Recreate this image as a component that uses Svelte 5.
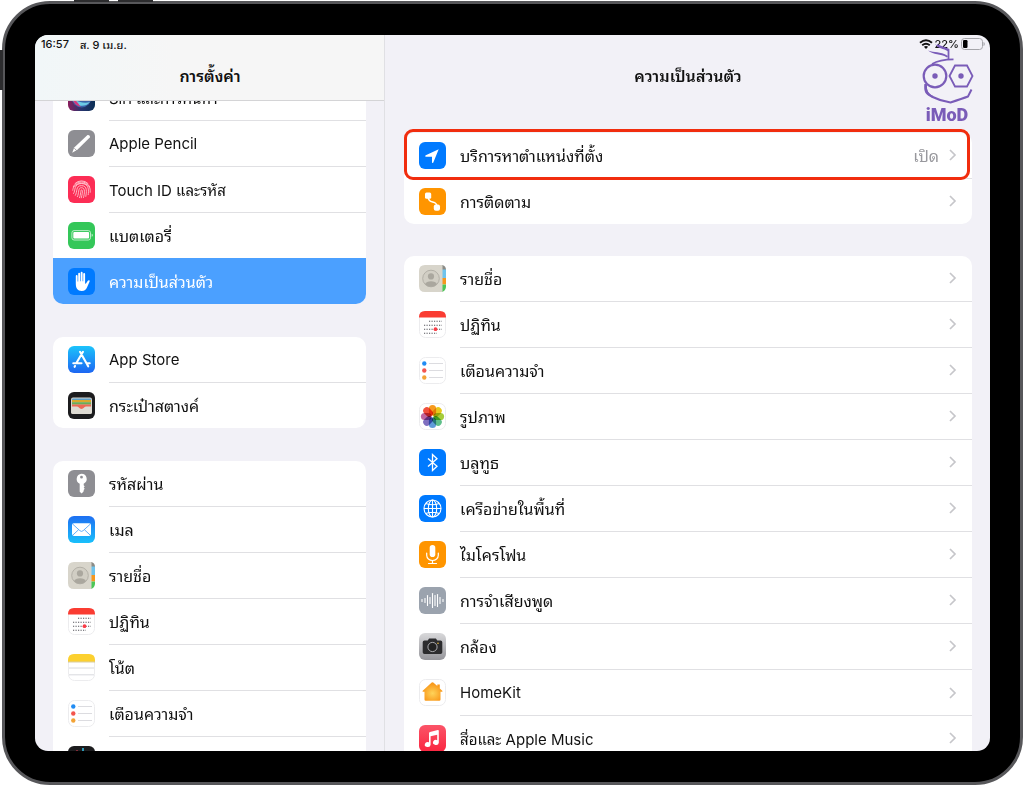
<script>
  const sidebar = [
    [
      { icon: 'siri', label: 'Siri และการค้นหา' },
      { icon: 'pencil', label: 'Apple Pencil' },
      { icon: 'touchid', label: 'Touch ID และรหัส' },
      { icon: 'battery', label: 'แบตเตอรี่' },
      { icon: 'privacy', label: 'ความเป็นส่วนตัว' }
    ],
    [
      { icon: 'appstore', label: 'App Store' },
      { icon: 'wallet', label: 'กระเป๋าสตางค์' }
    ],
    [
      { icon: 'key', label: 'รหัสผ่าน' },
      { icon: 'mail', label: 'เมล' },
      { icon: 'contacts', label: 'รายชื่อ' },
      { icon: 'calendar', label: 'ปฏิทิน' },
      { icon: 'notes', label: 'โน้ต' },
      { icon: 'reminders', label: 'เตือนความจำ' },
      { icon: 'voice', label: 'เสียงบันทึก' }
    ]
  ];

  const privacy = [
    [
      { icon: 'location', label: 'บริการหาตำแหน่งที่ตั้ง', value: 'เปิด' },
      { icon: 'tracking', label: 'การติดตาม' }
    ],
    [
      { icon: 'contacts', label: 'รายชื่อ' },
      { icon: 'calendar', label: 'ปฏิทิน' },
      { icon: 'reminders', label: 'เตือนความจำ' },
      { icon: 'photos', label: 'รูปภาพ' },
      { icon: 'bluetooth', label: 'บลูทูธ' },
      { icon: 'network', label: 'เครือข่ายในพื้นที่' },
      { icon: 'mic', label: 'ไมโครโฟน' },
      { icon: 'speech', label: 'การจำเสียงพูด' },
      { icon: 'camera', label: 'กล้อง' },
      { icon: 'home', label: 'HomeKit' },
      { icon: 'music', label: 'สื่อและ Apple Music' }
    ]
  ];

  const petals = ['#f79a1e', '#e8c81c', '#a5cc3a', '#5fbf8a', '#5f9bd8', '#7f6fc0', '#c0669f', '#f0503c'];
  const bars = [[3, 1], [6, 2], [8.5, 5], [11, 3], [13.5, 7], [16, 5], [18.5, 6], [21, 3], [24, 1]];

  let selected = $state('privacy');

  // Thai glyphs run smaller and sit lower than Latin ones
  const hasThai = (text) => /[\u0e00-\u0e7f]/.test(text);
  const hasLatin = (text) => /[a-z]/i.test(text);
</script>

{#snippet appIcon(name)}
  <svg class="icon" viewBox="0 0 27 27" aria-hidden="true">
    {#if name === 'siri'}
      <defs>
        <linearGradient id="siri" x1="0" x2="1"><stop offset="0" stop-color="#8a1d5c" /><stop offset=".5" stop-color="#27356f" /><stop offset="1" stop-color="#0b2f55" /></linearGradient>
      </defs>
      <rect width="27" height="27" rx="6" fill="url(#siri)" />
      <circle cx="13.5" cy="13.5" r="10" fill="#3c63a8" />
      <path d="M4 15c4 8 13 9 18 3-5 2-11 0-18-3z" fill="#6ccbe6" />
      <path d="M4 14c2 6 5 8 9 9-3-3-4-7-9-9z" fill="#d6377f" />
    {:else if name === 'pencil'}
      <rect width="27" height="27" rx="6" fill="#8e8e93" />
      <path d="M19 5.400c1.400-1 3.600.4 2.800 2.200L9.400 19.800 4.200 22.800l2-5.400z" fill="#fff" />
      <path d="M6.300 18.300l2.400 2.200" stroke="#8e8e93" stroke-width=".8" />
    {:else if name === 'touchid'}
      <rect width="27" height="27" rx="6" fill="#fc2d55" />
      <g fill="none" stroke="#ffc3cd" stroke-width=".9" stroke-linecap="round">
        <path d="M7 7.500a9 9 0 0 1 13 0M5.200 10.800c2.700-6.400 13.600-6.700 16.500 0M4.800 14.300c0-9.300 17.400-9.500 17.400 0v2" />
        <path d="M5.600 17.500c2.200-2.700-.2-9.800 7.900-10 8.300.2 7.100 8 6.700 11.200M7.400 19.300c2.200-3.500 0-9.500 6.100-9.700 6.200.2 5 6.500 4.300 10.800" />
        <path d="M9.400 20.700c2-3.700.2-8.900 4.100-9 4.200.1 3 6 2 9.800M11.500 21.700c1.400-3 1-7.800 2-7.900 1.700 0 .6 5-.2 8" />
      </g>
    {:else if name === 'battery'}
      <rect width="27" height="27" rx="6" fill="#34c759" />
      <rect x="3.900" y="8.600" width="18.600" height="9.400" rx="2.200" fill="none" stroke="#c9f2d3" stroke-width=".9" />
      <rect x="5.300" y="10" width="15.800" height="6.600" rx="1" fill="#fff" />
      <path d="M23.700 11.800c1.400.4 1.400 2.600 0 3z" fill="#d6f5de" />
    {:else if name === 'privacy'}
      <rect width="27" height="27" rx="6" fill="#007aff" />
      <path d="M7.800 15.500V8a.9.9 0 0 1 1.800 0v5.500h.6V5.700a.95.95 0 0 1 1.900 0v7.500h.6V4.800a.95.95 0 0 1 1.900 0v8.400h.6V6a.95.95 0 0 1 1.900 0v9.500l.7.300 2-3.100c.7-1 2.300-.5 1.800.7l-2.400 5.600c-1.100 2.500-2.600 3.900-5.500 3.900-4.200 0-5.900-2.600-5.900-7.400z" fill="#fff" />
    {:else if name === 'appstore'}
      <defs>
        <linearGradient id="store" x2="0" y2="1"><stop stop-color="#1cc3fb" /><stop offset="1" stop-color="#1d66f2" /></linearGradient>
      </defs>
      <rect width="27" height="27" rx="6" fill="url(#store)" />
      <g stroke="#fff" stroke-width="2.100" stroke-linecap="round">
        <path d="M12 5.800l8.200 14.500M15 5.800L8.400 17M7 20l-.4.800M5.300 17.200h8.200M18.500 17.200h3.200" />
      </g>
    {:else if name === 'wallet'}
      <rect width="27" height="27" rx="6" fill="#1c1c1e" />
      <rect x="3" y="5.500" width="21" height="16.500" rx="2" fill="#d9d6cd" />
      <path d="M4 8.500V7.500q0-1 1-1h17q1 0 1 1v1z" fill="#5b9dc9" />
      <path d="M4 8h19v2.200H4z" fill="#d9a92c" />
      <path d="M4 10.200h19v2.400H4z" fill="#69ad58" />
      <path d="M4 12.500h19v2.600h-5.500c-1.500 0-1.600 3-4 3s-2.500-3-4-3H4z" fill="#ed6a55" />
      <path d="M3 14.400h6.200c1.500 0 1.900 2.500 4.300 2.500s2.800-2.500 4.300-2.500H24V20q0 2-2 2H5q-2 0-2-2z" fill="#dedbd3" />
    {:else if name === 'key'}
      <rect width="27" height="27" rx="6" fill="#8e8e93" />
      <path fill-rule="evenodd" d="M13.500 3.800a5.200 5.200 0 0 1 2.200 9.900v1.500l1 1.200-1 1.200 1 1.200-1 1.200v1.300l-2 2.100-2-1.700v-8a5.200 5.200 0 0 1 1.800-9.900zm0 2a1.400 1.400 0 1 0 0 2.800 1.400 1.400 0 0 0 0-2.800z" fill="#fff" />
    {:else if name === 'mail'}
      <defs>
        <linearGradient id="mail" x2="0" y2="1"><stop stop-color="#1e6ff2" /><stop offset="1" stop-color="#19c0fb" /></linearGradient>
      </defs>
      <rect width="27" height="27" rx="6" fill="url(#mail)" />
      <rect x="4" y="7.300" width="19" height="12.600" rx="1.800" fill="#fff" />
      <path d="M4.600 8l7.300 6.700q1.600 1.400 3.200 0L22.400 8M4.600 19.300l6.100-5.700M22.400 19.300l-6.100-5.700" fill="none" stroke="#3d9af7" stroke-width=".8" />
    {:else if name === 'contacts'}
      <path d="M17 0h6.500Q27 1 27 5v4H17z" fill="#8b8b86" />
      <path d="M17 4.500h10v9H17z" fill="#6fc3ec" />
      <path d="M17 13h10v6.500H17z" fill="#f5971f" />
      <path d="M17 19.500h10V22q-.5 4-4 5h-6z" fill="#4cc658" />
      <path d="M6 0h17.500v27H6q-6 0-6-6V6q0-6 6-6z" fill="#d8d5cb" />
      <circle cx="12" cy="13.500" r="8.300" fill="#d1cec4" stroke="#b3b0a7" />
      <circle cx="12" cy="11.400" r="3.100" fill="#aaa79e" />
      <path d="M6 19.200c1-4 11-4 12 0a8.300 8.300 0 0 1-12 0z" fill="#aaa79e" />
    {:else if name === 'calendar'}
      <rect x=".5" y=".5" width="26" height="26" rx="6" fill="#fff" stroke="#ececee" />
      <path d="M0 6q0-6 6-6h15q6 0 6 6v.5H0z" fill="#fa3c32" />
      <g stroke="#55555c" stroke-width="1.100" stroke-dasharray="1.200 1.300">
        <path d="M10 10.300h13M5 14.300h18M5 18.200h18M5 22.300h13" />
      </g>
      <circle cx="16.500" cy="18.200" r="1.900" fill="#fa3c46" />
    {:else if name === 'notes'}
      <rect x=".5" y=".5" width="26" height="26" rx="6" fill="#fff" stroke="#ececee" />
      <path d="M0 6q0-6 6-6h15q6 0 6 6v1.700H0z" fill="#fcd02f" />
      <path d="M0 8h27" stroke="#c9b876" stroke-width=".7" />
      <path d="M1 14h25M1 20.800h25" stroke="#ced1d6" stroke-width=".8" />
    {:else if name === 'reminders'}
      <rect x=".5" y=".5" width="26" height="26" rx="6" fill="#fff" stroke="#ececee" />
      <circle cx="5.300" cy="6.500" r="2.200" fill="#218cf3" />
      <circle cx="5.300" cy="13.500" r="2.200" fill="#f3554e" />
      <circle cx="5.300" cy="20.500" r="2.200" fill="#f3a336" />
      <path d="M10 6.500h14M10 13.500h14M10 20.500h14" stroke="#d8d8dc" stroke-width=".9" />
    {:else if name === 'voice'}
      <rect width="27" height="27" rx="6" fill="#1c1c1e" />
      <path d="M9 4v18M6 9v9M11.500 7v13" stroke="#e63a50" />
      <path d="M15 2v23" stroke="#35c3e8" stroke-width="1.500" />
      <path d="M18 7v13M21 10v7" stroke="#ddd" />
    {:else if name === 'location'}
      <rect width="27" height="27" rx="6" fill="#007aff" />
      <path d="M19.700 7.300 14.300 20.500c-.4.900-1.300.7-1.300-.2v-5.600H7c-1 0-1.200-.9-.2-1.400z" fill="#fff" />
    {:else if name === 'tracking'}
      <rect width="27" height="27" rx="6" fill="#ff9500" />
      <rect x="6" y="4.500" width="6.200" height="6.200" rx="1.500" fill="#fff" />
      <rect x="14.800" y="16.500" width="6.200" height="6.200" rx="2" fill="#fff" />
      <path d="M9 8c0 9 9 3 9 11" fill="none" stroke="#fff" stroke-width="1.500" />
    {:else if name === 'photos'}
      <rect x=".5" y=".5" width="26" height="26" rx="6" fill="#fff" stroke="#ececee" />
      {#each petals as fill, i}
        <rect class="petal" x="9.900" y="1.900" width="7.200" height="10.600" rx="3.600" {fill} transform="rotate({i * 45} 13.5 13.5)" />
      {/each}
    {:else if name === 'bluetooth'}
      <rect width="27" height="27" rx="6" fill="#007aff" />
      <path d="M9 9.500l9 7.800-4.500 4.200v-16L18 9.700l-9 7.800" fill="none" stroke="#fff" stroke-width="1.300" />
    {:else if name === 'network'}
      <rect width="27" height="27" rx="6" fill="#007aff" />
      <g fill="none" stroke="#fff" stroke-width="1.100">
        <circle cx="13.500" cy="13.500" r="8.500" />
        <ellipse cx="13.500" cy="13.500" rx="4.200" ry="8.500" />
        <path d="M13.500 5v17M5 13.500h17M6.800 8.500q6.700 2.600 13.400 0M6.800 18.500q6.700-2.600 13.400 0" />
      </g>
    {:else if name === 'mic'}
      <rect width="27" height="27" rx="6" fill="#ff9500" />
      <rect x="10.700" y="4" width="5.600" height="12" rx="2.800" fill="#fff" />
      <path d="M7.700 12v2.200a5.800 5.300 0 0 0 11.600 0V12M13.500 19.500v3M9.500 22.500h8" fill="none" stroke="#fff" stroke-width="1.200" stroke-linecap="round" />
    {:else if name === 'speech'}
      <rect width="27" height="27" rx="6" fill="#9ba3ae" />
      {#each bars as [x, h]}
        <path d="M{x} {13.5 - h}v{h * 2}" stroke="#fff" stroke-width="1.100" stroke-linecap="round" />
      {/each}
    {:else if name === 'camera'}
      <defs>
        <linearGradient id="camera" x2="0" y2="1"><stop stop-color="#d8d8da" /><stop offset="1" stop-color="#96969b" /></linearGradient>
      </defs>
      <rect width="27" height="27" rx="6" fill="url(#camera)" />
      <path d="M5.500 7.500h3.200l1.400-2h6.800l1.400 2h3.200q1.800 0 1.800 1.800v9.900q0 1.800-1.800 1.800h-16q-1.800 0-1.800-1.800V9.300q0-1.800 1.800-1.800z" fill="#2c2c2e" />
      <circle cx="13.500" cy="14" r="4.600" fill="#222" stroke="#b9b9bc" stroke-width=".9" />
      <circle cx="19" cy="10.300" r=".8" fill="#e8b93b" />
    {:else if name === 'home'}
      <defs>
        <radialGradient id="home" cy=".6"><stop stop-color="#fed35a" /><stop offset="1" stop-color="#f99a1c" /></radialGradient>
      </defs>
      <rect x=".5" y=".5" width="26" height="26" rx="6" fill="#fff" stroke="#ececee" />
      <path d="M12.700 3.500q.8-.7 1.600 0l4 3.600V5.500h2.500v3.900l2.500 2.300q.7.900-.4 1.100H21.500v7.700q0 1.200-1.200 1.200H6.700q-1.200 0-1.200-1.200v-7.700H4.100q-1.100-.2-.4-1.100z" fill="url(#home)" />
    {:else if name === 'music'}
      <defs>
        <linearGradient id="music" x2="0" y2="1"><stop stop-color="#fb5468" /><stop offset="1" stop-color="#fa2640" /></linearGradient>
      </defs>
      <rect width="27" height="27" rx="6" fill="url(#music)" />
      <path d="M10 8.100q0-1 1-1.200l7.800-1.800q1-.2 1 .8v11.800a2.900 2.500 0 1 1-1.600-2.500V9.700l-6.600 1.500v8.600a2.900 2.500 0 1 1-1.600-2.500z" fill="#fff" />
    {/if}
  </svg>
{/snippet}

<div class="device">
  <span class="key volume-up"></span>
  <span class="key volume-down"></span>
  <span class="key power"></span>

  <div class="screen">
    <nav class="sidebar">
      <header class="bar">
        <div class="status">
          <span>16:57</span>
          <span>ส. 9 เม.ย.</span>
        </div>
        <h1>การตั้งค่า</h1>
      </header>

      <div class="groups scrolled">
        {#each sidebar as group}
          <ul class="group">
            {#each group as item}
              <li>
                <a
                  class="row"
                  class:active={item.icon === selected}
                  class:thai={hasThai(item.label)}
                  class:latin={hasLatin(item.label)}
                  href="#{item.icon}"
                  onclick={() => (selected = item.icon)}
                >
                  {@render appIcon(item.icon)}
                  <span class="body">{item.label}</span>
                </a>
              </li>
            {/each}
          </ul>
        {/each}
      </div>
    </nav>

    <main class="detail">
      <header class="bar">
        <div class="status right">
          <svg class="wifi" viewBox="0 0 14 10" aria-hidden="true">
            <g fill="none" stroke="#111" stroke-width="1.900">
              <path d="M1 3.700q6-5 12 0M3.200 6.200q3.800-3 7.600 0" />
            </g>
            <path d="M4.900 7.700q2.100-1.500 4.200 0L7 10z" fill="#111" />
          </svg>
          <span>22%</span>
          <svg class="cell" viewBox="0 0 24 12" aria-hidden="true">
            <rect x=".5" y=".5" width="21" height="11" rx="3" fill="none" stroke="#a5a5aa" />
            <rect x="2" y="2" width="4.500" height="8" rx="1.200" fill="#000" />
            <path d="M22.500 4c1.700.5 1.700 3.500 0 4z" fill="#a5a5aa" />
          </svg>
        </div>
        <h2>ความเป็นส่วนตัว</h2>
      </header>

      <div class="groups">
        {#each privacy as group, g}
          <ul class="group">
            {#each group as item}
              <li>
                <a
                  class="row"
                  class:thai={hasThai(item.label)}
                  class:latin={hasLatin(item.label)}
                  href="#{item.icon}"
                >
                  {@render appIcon(item.icon)}
                  <span class="body">
                    <span class="label">{item.label}</span>
                    {#if item.value}<span class="value">{item.value}</span>{/if}
                    <svg class="chevron" viewBox="0 0 8 14" aria-hidden="true">
                      <path d="M1 2l5 5-5 5" fill="none" stroke="#c6c6ca" stroke-width="1.700" />
                    </svg>
                  </span>
                </a>
              </li>
            {/each}
            {#if g === 0}<li class="marker" aria-hidden="true"></li>{/if}
          </ul>
        {/each}
      </div>

      <div class="watermark">
        <svg viewBox="0 0 54 62" aria-hidden="true">
          <g fill="none" stroke="#7a5cb8">
            <circle cx="15" cy="32" r="11.300" stroke-width="2.200" />
            <path d="M29.500 32l5.500-10.500h12L52.500 32 47 42.500H35z" stroke-width="1.800" />
            <path d="M12 20c5-3 12-4.500 21.500-4.600" stroke-width="1.600" />
            <path d="M28.500 15.500V5.500L17 1" stroke-width="1.800" />
            <path d="M5.500 40c0 7 1.500 9.500 6 12.500 7 3.500 12 5 19 6 6-2 12-4 17.500-6l3.500-7" stroke-width="2" />
          </g>
          <path d="M8 6.500c7 3 11 0 20 5.500l-1 1.500C20 9 14 11.500 8 6.500zM15 0c5 4 9 2 14 5.500l-.5 2C23 4 18 5 15 0z" fill="#7a5cb8" />
          <path d="M4.500 40c-1 8 1 11 7 13l2-1c-5-2-7-5-6.500-11z" fill="#7a5cb8" />
          <circle cx="15" cy="32" r="2.700" fill="#7a5cb8" />
          <circle cx="41" cy="32" r="2.700" fill="#7a5cb8" />
        </svg>
        <span>iMoD</span>
      </div>
    </main>
  </div>
</div>

<style>
  :global(body) {
    background: #fff;
    font-family: Inter, 'Noto Sans Thai Looped', Loma, Garuda, Waree, 'Noto Sans', sans-serif;
    color: #111;
  }

  .device {
    position: relative;
    box-sizing: border-box;
    height: calc(100vh - 1px);
    margin: 1px 1px 0 2px;
    padding: 31px 30px;
    border: 3px solid #57575a;
    border-radius: 48px;
    background: #000;
  }

  .key { position: absolute; background: #2c2c2e; }
  .volume-up, .volume-down { top: -4px; width: 35px; height: 2px; }
  .volume-up { left: 69px; }
  .volume-down { left: 113px; }
  .power { left: -5px; top: 46px; width: 3px; height: 40px; }

  .screen {
    display: grid;
    grid-template-columns: 350px 1fr;
    height: 100%;
    overflow: hidden;
    border-radius: 13px;
    background: #f2f1f7;
  }

  .sidebar, .detail { min-width: 0; min-height: 0; overflow: hidden; }
  .sidebar { border-right: 1px solid #e0e0e4; }
  .detail { position: relative; }

  .bar {
    position: relative;
    box-sizing: border-box;
    height: 66px;
    padding: 0 5px 0 6px;
    z-index: 1;
  }
  .sidebar .bar {
    background: linear-gradient(90deg, #f1f7f8, #f6f6f6 40%);
    border-bottom: 1px solid #d4d4d6;
  }

  .status {
    display: flex;
    align-items: center;
    gap: 11px;
    height: 18px;
    font-size: 11px;
    font-weight: 500;
  }
  .status.right { justify-content: flex-end; gap: 2px; }
  .wifi { width: 14px; height: 10px; }
  .cell { width: 24px; height: 12px; }

  h1, h2 {
    margin: 11px 0 0;
    font-size: 16px;
    line-height: 24px;
    font-weight: 600;
    text-align: center;
  }

  .groups {
    display: flex;
    flex-direction: column;
    gap: 33px;
    padding: 32px 18px;
  }
  .groups.scrolled { margin-top: -26px; padding-top: 0; }
  .detail .groups { gap: 32px; padding-left: 19px; }

  .group {
    position: relative;
    margin: 0;
    padding: 0;
    list-style: none;
    border-radius: 10px;
    background: #fff;
  }

  .row {
    display: flex;
    align-items: center;
    gap: 14px;
    padding-left: 15px;
    color: inherit;
    font-size: 16px;
    text-decoration: none;
  }
  .row.latin { font-size: 15px; }
  .icon { flex: none; width: 27px; height: 27px; }
  .petal { mix-blend-mode: multiply; }

  .body {
    flex: 1;
    display: flex;
    align-items: center;
    gap: 10px;
    height: 45px;
    padding-right: 15px;
    white-space: nowrap;
  }
  .thai .body { height: 43px; padding-bottom: 2px; }
  li + li .body { border-top: 1px solid #e0e0e3; }

  .row.active { background: #4ba0ff; color: #fff; }
  .row.active .body { border-color: transparent; }
  li:last-child .row.active { border-radius: 0 0 10px 10px; }

  .label { flex: 1; }
  .value { color: #98989d; }
  .chevron { width: 8px; height: 14px; }

  /* red frame drawn over the location services row */
  .marker {
    position: absolute;
    top: -4px;
    left: 0;
    right: 2px;
    height: 45px;
    border: 3px solid #f12d0e;
    border-radius: 9px;
    pointer-events: none;
  }

  .watermark {
    position: absolute;
    top: 9px;
    right: 16px;
    z-index: 2;
    display: flex;
    flex-direction: column;
    align-items: center;
    width: 54px;
    color: #7a5cb8;
    font-family: Roboto, sans-serif;
    font-size: 18px;
    font-weight: 900;
    line-height: 18px;
  }
  .watermark svg { width: 54px; height: 62px; }
</style>
